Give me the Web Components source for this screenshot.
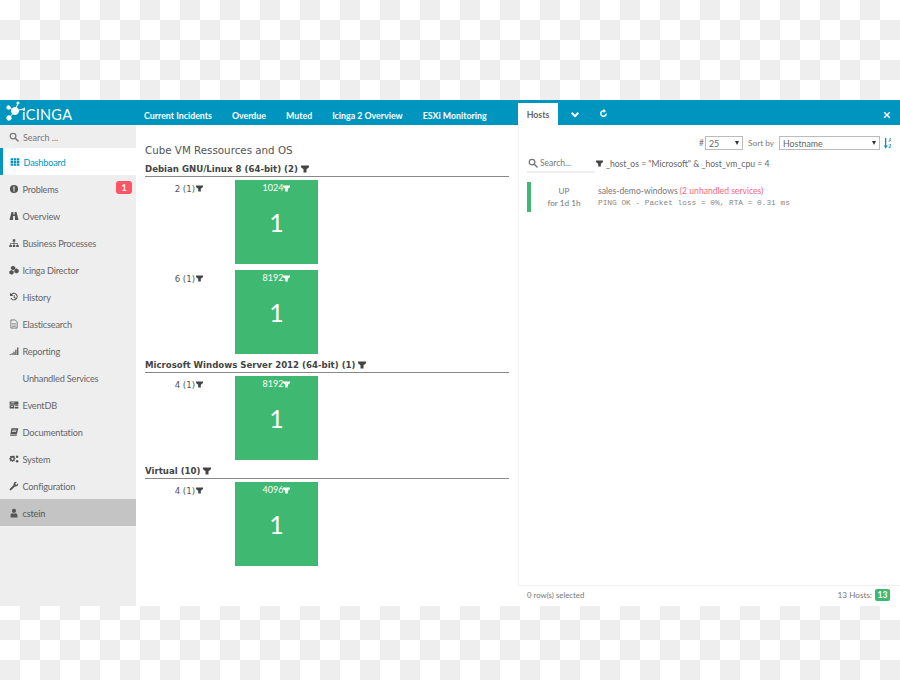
<!DOCTYPE html>
<html>
<head>
<meta charset="utf-8">
<title>Icinga</title>
<style>
  html, body { margin: 0; height: 100%; }
  body {
    background: repeating-conic-gradient(#eeeeee 0 25%, #ffffff 0 50%) 0 0 / 40px 40px;
    font-family: Lato, "Open Sans", sans-serif;
  }
</style>
</head>
<body>
<ic-app>
  <ic-header slot="header"></ic-header>
  <ic-sidebar slot="sidebar">
    <ic-nav-item icon="dashboard" active>Dashboard</ic-nav-item>
    <ic-nav-item icon="problems" badge="1">Problems</ic-nav-item>
    <ic-nav-item icon="overview">Overview</ic-nav-item>
    <ic-nav-item icon="sitemap">Business Processes</ic-nav-item>
    <ic-nav-item icon="director">Icinga Director</ic-nav-item>
    <ic-nav-item icon="history">History</ic-nav-item>
    <ic-nav-item icon="doc">Elasticsearch</ic-nav-item>
    <ic-nav-item icon="chart">Reporting</ic-nav-item>
    <ic-nav-item>Unhandled Services</ic-nav-item>
    <ic-nav-item icon="server">EventDB</ic-nav-item>
    <ic-nav-item icon="book">Documentation</ic-nav-item>
    <ic-nav-item icon="cogs">System</ic-nav-item>
    <ic-nav-item icon="wrench">Configuration</ic-nav-item>
    <ic-nav-item icon="user" user>cstein</ic-nav-item>
  </ic-sidebar>
  <ic-cube-view slot="left" title-text="Cube VM Ressources and OS">
    <ic-cube-group label="Debian GNU/Linux 8 (64-bit) (2)">
      <ic-cube-row label="2 (1)" tile="1024" count="1"></ic-cube-row>
      <ic-cube-row label="6 (1)" tile="8192" count="1"></ic-cube-row>
    </ic-cube-group>
    <ic-cube-group label="Microsoft Windows Server 2012 (64-bit) (1)">
      <ic-cube-row label="4 (1)" tile="8192" count="1"></ic-cube-row>
    </ic-cube-group>
    <ic-cube-group label="Virtual (10)">
      <ic-cube-row label="4 (1)" tile="4096" count="1"></ic-cube-row>
    </ic-cube-group>
  </ic-cube-view>
  <ic-hosts-panel slot="right"></ic-hosts-panel>
</ic-app>

<script>
const ICONS = {
  search: '<circle cx="6.5" cy="6.5" r="4.5" fill="none" stroke="currentColor" stroke-width="2"/><path d="M10 10l4.5 4.5" stroke="currentColor" stroke-width="2.4" stroke-linecap="round"/>',
  dashboard: '<path d="M1 2h4v3.5H1zM6 2h4v3.5H6zM11 2h4v3.5h-4zM1 6.3h4v3.5H1zM6 6.3h4v3.5H6zM11 6.3h4v3.5h-4zM1 10.6h4v3.5H1zM6 10.6h4v3.5H6zM11 10.6h4v3.5h-4z"/>',
  problems: '<path fill-rule="evenodd" d="M8 1.5a6.5 6.5 0 1 0 0 13 6.5 6.5 0 0 0 0-13zM7 4h2v5H7zM7 10h2v2H7z"/>',
  overview: '<path d="M4 1.500h3v4h2v-4h3l3 11.500v1.500H9.500V8h-3v6.500H1V13z"/>',
  sitemap: '<path d="M6 2h4v4H8.600v2H14v3h1.500v3.500h-4V11H13V9H8.600v2H10v3.500H6V11h1.400V9H3v2h1.500v3.500h-4V11H2V8h5.400V6H6z"/>',
  director: '<path d="M6.500 1l3.500 2v3.500L6.500 8.500 3 6.500V3zM11.500 5l4 2.500v4l-3.500 2-3.500-2V8zM4 8l3.500 2v3.500L4.500 15.500 .5 13.500V10z"/>',
  history: '<path d="M3.500 3.200A6 6 0 1 1 2.200 9.500h2a4.200 4.200 0 1 0 .7-5L7 6.500H1.500V1z"/><path d="M7.500 5h1.600v3.200l2.100 1.300-.8 1.300-2.900-1.800z"/>',
  doc: '<path fill="none" stroke="currentColor" stroke-width="1.200" d="M3 1.500h7l3 3v10H3z"/><path d="M5 7h6v1H5zM5 9h6v1H5zM5 11h6v1H5z"/>',
  chart: '<path d="M1 13h2v1.500H1zM4 11.500h2v3H4zM7 9h2v5.500H7zM10 6h2v8.500h-2zM13 2.500h2v12h-2z"/>',
  server: '<path d="M1 2.500h14v5H1zM1 8.500h7v5H1zM9 8.500h6v1.500H9zM9 11h6v2.500H9z"/><path fill="#eee" d="M3 4h6v1.200H3zM3 10h3v1.200H3z"/>',
  book: '<path d="M4 2h11l-2.500 10H2zM2 12.800h10.500l-.3 1.200H1.500z"/><path fill="#eee" d="M5.500 4.500h6.500l-.2 1H5.300zM5 6.800h6.500l-.2 1H4.800z"/>',
  cogs: '<path fill-rule="evenodd" d="M6 3l1.200.3.900-.9 1.300 1.300-.7 1 .4 1.200 1.200.3v1.800l-1.200.3-.4 1.200.7 1-1.300 1.300-1-.7-1.100.4-.3 1.200H5l-.3-1.200-1.100-.4-1 .7L1.300 11l.7-1-.4-1.200L.4 8.500V6.700l1.200-.3.400-1.200-.7-1 1.300-1.300 1 .7 1.100-.4L5 2.500zM5.500 6a1.700 1.700 0 1 0 0 3.400 1.700 1.700 0 0 0 0-3.400z"/><circle cx="13" cy="4.500" r="2"/><circle cx="13" cy="11.500" r="2"/>',
  wrench: '<path d="M14.500 3.500l-2.800 2.700-1.900-1.900L12.500 1.500a4 4 0 0 0-5.200 5L1.500 12.300a1.500 1.500 0 0 0 2.200 2.200l5.800-5.800a4 4 0 0 0 5-5.200z"/>',
  user: '<circle cx="8" cy="4.500" r="3.300"/><path d="M2.500 15v-3.500C2.500 9.500 4 8.500 5.500 8.300c1.500 1 3.500 1 5 0 1.500.2 3 1.200 3 3.200V15z"/>',
  filter: '<path d="M0 1h16v3.500L11 8.500V15H5V8.500L0 4.500z"/>',
  chevron: '<path d="M1.500 5.500l2.300-2.300L8 7.400l4.200-4.200 2.300 2.300L8 12z"/>',
  refresh: '<path fill-rule="evenodd" d="M8 2a6 6 0 1 0 6 6h-2.400A3.600 3.600 0 1 1 8 4.400V7l4.500-3.500L8-.500z"/>',
  close: '<path d="M3.500 1.500L8 6l4.500-4.500 2 2L10 8l4.500 4.500-2 2L8 10l-4.500 4.500-2-2L6 8 1.500 3.500z"/>'
};

class IcIcon extends HTMLElement {
  connectedCallback() {
    const size = this.getAttribute('size') || 10;
    this.attachShadow({ mode: 'open' }).innerHTML = `
      <style>
        :host { display: inline-flex; width: ${size}px; height: ${size}px; flex: none; }
        svg { width: 100%; height: 100%; fill: currentColor; display: block; }
      </style>
      <svg viewBox="0 0 16 16">${ICONS[this.getAttribute('name')] || ''}</svg>`;
  }
}

class IcApp extends HTMLElement {
  constructor() {
    super();
    this.attachShadow({ mode: 'open' }).innerHTML = `
      <style>
        :host {
          display: flex; flex-direction: column;
          box-sizing: border-box; width: 900px; height: 506px;
          margin-top: 100px; background: #fff; color: #555;
        }
        .main { display: flex; flex: 1; min-height: 0; }
        ::slotted([slot=sidebar]) { width: 136px; flex: none; }
        ::slotted([slot=left]) { width: 382px; flex: none; }
        ::slotted([slot=right]) { flex: 1; }
      </style>
      <slot name="header"></slot>
      <div class="main">
        <slot name="sidebar"></slot>
        <slot name="left"></slot>
        <slot name="right"></slot>
      </div>`;
  }
}

class IcHeader extends HTMLElement {
  constructor() {
    super();
    this.attachShadow({ mode: 'open' }).innerHTML = `
      <style>
        :host {
          display: flex; align-items: stretch; height: 25px;
          background: #0095bf; color: #fff; position: relative;
        }
        .logo { width: 144px; flex: none; display: flex; align-items: flex-end; box-sizing: border-box; position: relative; }
        .logo svg { width: 20px; height: 22px; position: absolute; left: 5px; top: 1px; }
        .logo span { font: 400 14.500px/20px Lato, sans-serif; margin-left: 22px; letter-spacing: .3px; }
        nav { display: flex; width: 374px; flex: none; gap: 20px; align-items: center; padding-top: 5px; box-sizing: border-box; font: 700 8.800px Lato, sans-serif; white-space: nowrap; }
        .right { flex: 1; display: flex; align-items: center; padding-top: 4px; }
        .tab {
          align-self: flex-end; width: 40px; height: 22px; background: #fff; color: #666;
          font: 700 8.800px/24px Lato, sans-serif; text-align: center; margin-top: -4px;
        }
        .chev { margin-left: 12px; }
        .ref { margin-left: 19px; margin-top: -2px; }
        .close { margin-left: auto; margin-right: 9px; }
      </style>
      <div class="logo">
        <svg viewBox="0 0 20 22">
          <g fill="#fff" stroke="#fff">
            <path stroke-width="1" fill="none" d="M4 17L10 10L3.500 6.500M10 10L13 2M10 10L20 7.500"/>
            <circle cx="10" cy="10" r="3.500"/>
            <circle cx="3.500" cy="6.500" r="1.700"/>
            <circle cx="13" cy="2" r="1.100"/>
            <circle cx="4" cy="17" r="2.200"/>
            <circle cx="20" cy="7.500" r=".7"/>
          </g>
        </svg>
        <span>iCINGA</span>
      </div>
      <nav>
        <span>Current Incidents</span><span>Overdue</span><span>Muted</span><span>Icinga 2 Overview</span><span>ESXi Monitoring</span>
      </nav>
      <div class="right">
        <div class="tab">Hosts</div>
        <ic-icon class="chev" name="chevron" size="10"></ic-icon>
        <ic-icon class="ref" name="refresh" size="9"></ic-icon>
        <ic-icon class="close" name="close" size="8"></ic-icon>
      </div>`;
  }
}

class IcSidebar extends HTMLElement {
  constructor() {
    super();
    this.attachShadow({ mode: 'open' }).innerHTML = `
      <style>
        :host { display: block; background: #eeeeee; }
        .search {
          height: 23px; display: flex; align-items: center; gap: 4px; box-sizing: border-box; padding-top: 1px;
          padding-left: 9px; font: 9px Lato, sans-serif; color: #777;
        }
      </style>
      <div class="search"><ic-icon name="search" size="10"></ic-icon><span>Search ...</span></div>
      <slot></slot>`;
  }
}

class IcNavItem extends HTMLElement {
  connectedCallback() {
    const icon = this.getAttribute('icon');
    const badge = this.getAttribute('badge');
    this.attachShadow({ mode: 'open' }).innerHTML = `
      <style>
        :host {
          display: flex; align-items: center; height: 27px; box-sizing: border-box;
          padding: 1px 0 0 9px; gap: 3.500px; position: relative;
          font: 9.200px Lato, sans-serif; letter-spacing: -.2px; color: #666;
        }
        :host([active]) { background: #fff; color: #0095bf; border-left: 3px solid #0095bf; padding-left: 7px; }
        :host([user]) { background: #c4c4c4; color: #555; }
        .slot { width: 10px; flex: none; display: flex; color: #555; }
        :host([active]) .slot { color: #0095bf; }
        .badge {
          position: absolute; right: 4px; top: 6px; width: 16px; height: 13px;
          background: #ff5566; color: #fff; border-radius: 3px;
          font: 700 9px/13px Lato, sans-serif; letter-spacing: 0; text-align: center;
        }
      </style>
      <span class="slot">${icon ? `<ic-icon name="${icon}" size="10"></ic-icon>` : ''}</span>
      <span><slot></slot></span>
      ${badge ? `<span class="badge">${badge}</span>` : ''}`;
  }
}

class IcCubeView extends HTMLElement {
  connectedCallback() {
    this.attachShadow({ mode: 'open' }).innerHTML = `
      <style>
        :host { display: block; padding: 17px 9px 0 9px; box-sizing: border-box; }
        h1 {
          margin: 0; height: 16px; font: 400 10.300px/16px "DejaVu Sans", sans-serif; color: #555;
        }
      </style>
      <h1>${this.getAttribute('title-text')}</h1>
      <slot></slot>`;
  }
}

class IcCubeGroup extends HTMLElement {
  connectedCallback() {
    this.attachShadow({ mode: 'open' }).innerHTML = `
      <style>
        :host { display: block; }
        h2 {
          margin: 0 0 3px; height: 19px; box-sizing: border-box; padding-top: 4px;
          border-bottom: 1px solid #888; display: flex; align-items: center; gap: 3px;
          font: 700 8.600px/14px "DejaVu Sans", sans-serif; color: #444;
        }
        h2 ic-icon { margin-top: -1px; }
        .rows { display: flex; flex-direction: column; gap: 6px; }
      </style>
      <h2>${this.getAttribute('label')} <ic-icon name="filter" size="8"></ic-icon></h2>
      <div class="rows"><slot></slot></div>`;
  }
}

class IcCubeRow extends HTMLElement {
  connectedCallback() {
    this.attachShadow({ mode: 'open' }).innerHTML = `
      <style>
        :host { display: flex; }
        .label {
          width: 58px; flex: none; text-align: right; padding-top: 3px; box-sizing: border-box;
          font: 8.600px/12px "DejaVu Sans", sans-serif; color: #555;
          display: flex; justify-content: flex-end; align-items: flex-start; gap: 1px;
        }
        .label ic-icon { margin-top: 2px; color: #444; }
        .tile {
          margin-left: 32px; width: 83px; height: 84px; background: #3fb971; color: #fff;
          display: flex; flex-direction: column; align-items: center;
        }
        .name { font: 9px/12px Lato, sans-serif; margin-top: 2px; display: flex; align-items: center; }
        .count { font: 400 25px/30px Lato, sans-serif; margin-top: 13px; }
      </style>
      <div class="label"><span>${this.getAttribute('label')}</span><ic-icon name="filter" size="7"></ic-icon></div>
      <div class="tile">
        <div class="name"><span>${this.getAttribute('tile')}</span><ic-icon name="filter" size="7"></ic-icon></div>
        <div class="count">${this.getAttribute('count')}</div>
      </div>`;
  }
}

class IcSelect extends HTMLElement {
  connectedCallback() {
    this.attachShadow({ mode: 'open' }).innerHTML = `
      <style>
        :host {
          display: flex; align-items: center; justify-content: space-between; box-sizing: border-box;
          height: 14px; padding: 0 3px; border: 1px solid #bbb; background: #fff;
          width: ${this.getAttribute('width')}px; font: 8.800px Lato, sans-serif; color: #666; flex: none;
        }
        i { width: 0; height: 0; border: 2.500px solid transparent; border-top: 4px solid #333; border-bottom: 0; }
      </style>
      <span><slot></slot></span><i></i>`;
  }
}

class IcHostsPanel extends HTMLElement {
  constructor() {
    super();
    this.attachShadow({ mode: 'open' }).innerHTML = `
      <style>
        :host { display: flex; flex-direction: column; font: 8.500px Lato, sans-serif; color: #777; }
        .body { flex: 1; border-left: 1px solid #f3f3f3; border-bottom: 1px solid #f0f0f0; padding: 11px 9px 0 8px; }
        .controls { display: flex; justify-content: flex-end; align-items: center; height: 14px; }
        .hash { margin-right: 1px; }
        .sortby { margin: 0 5px; width: 26px; font-size: 8.300px; white-space: nowrap; }
        .sorticon { width: 7px; height: 12px; margin-left: 4px; display: block; }
        .filter { display: flex; align-items: flex-start; height: 22px; margin-top: 5px; }
        .search {
          width: 68px; flex: none; height: 18px; display: flex; align-items: center; gap: 2px;
          border-bottom: 2px solid #eee; box-sizing: border-box; margin-right: 1px; padding-left: 1px;
        }
        .query { display: flex; align-items: center; gap: 3px; height: 17px; font-size: 8.600px; color: #666; white-space: nowrap; }
        .query ic-icon { color: #444; }
        .row { display: flex; height: 30px; margin-top: 5px; }
        .state { width: 4px; background: #3fb971; flex: none; }
        .since { width: 66px; flex: none; text-align: center; font-size: 8.200px; line-height: 12px; padding-top: 3px; box-sizing: border-box; }
        .info { line-height: 12px; padding: 3px 0 0 1px; white-space: nowrap; }
        .host { color: #777; font-size: 8.600px; }
        .host b { font-weight: 400; color: #ff6677; }
        .out { font: 7.800px/12px "Liberation Mono", monospace; color: #888; }
        .foot {
          height: 20px; flex: none; display: flex; justify-content: space-between; align-items: center;
          padding: 0 10px 2px 9px; box-sizing: border-box; font-size: 7.800px;
        }
        .total { display: flex; align-items: center; gap: 3px; font-size: 8.200px; }
        .count {
          width: 15px; height: 12px; background: #3fb971; color: #fff; border-radius: 2px;
          font: 700 8.500px/12px Lato, sans-serif; text-align: center;
        }
      </style>
      <div class="body">
        <div class="controls">
          <span class="hash">#</span>
          <ic-select width="38">25</ic-select>
          <span class="sortby">Sort by</span>
          <ic-select width="101">Hostname</ic-select>
          <svg class="sorticon" viewBox="0 0 7 12">
            <path fill="#0095bf" d="M1 1h1.300v7.500H4L1.700 11.500-.4 8.500H1z"/>
            <text x="4.500" y="4.800" font-family="Lato" font-size="5" font-weight="700" fill="#0095bf">A</text>
            <text x="4.500" y="11" font-family="Lato" font-size="5" font-weight="700" fill="#0095bf">Z</text>
          </svg>
        </div>
        <div class="filter">
          <div class="search"><ic-icon name="search" size="10"></ic-icon><span>Search...</span></div>
          <div class="query"><ic-icon name="filter" size="7"></ic-icon><span>_host_os = "Microsoft" &amp; _host_vm_cpu = 4</span></div>
        </div>
        <div class="row">
          <div class="state"></div>
          <div class="since">UP<br>for 1d 1h</div>
          <div class="info">
            <div class="host">sales-demo-windows <b>(2 unhandled services)</b></div>
            <div class="out">PING OK - Packet loss = 0%, RTA = 0.31 ms</div>
          </div>
        </div>
      </div>
      <div class="foot">
        <span>0 row(s) selected</span>
        <span class="total">13 Hosts: <span class="count">13</span></span>
      </div>`;
  }
}

customElements.define('ic-icon', IcIcon);
customElements.define('ic-app', IcApp);
customElements.define('ic-header', IcHeader);
customElements.define('ic-sidebar', IcSidebar);
customElements.define('ic-nav-item', IcNavItem);
customElements.define('ic-cube-view', IcCubeView);
customElements.define('ic-cube-group', IcCubeGroup);
customElements.define('ic-cube-row', IcCubeRow);
customElements.define('ic-select', IcSelect);
customElements.define('ic-hosts-panel', IcHostsPanel);
</script>
</body>
</html>
